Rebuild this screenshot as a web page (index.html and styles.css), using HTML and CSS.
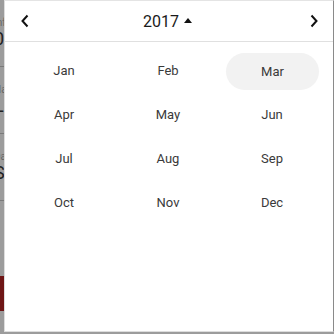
FILE: index.html
```html
<!DOCTYPE html>
<html lang="en">
    <head>
        <meta charset="UTF-8" />
        <link rel="stylesheet" href="styles.css">
    </head>
    <body>
        <div class="page">
            <div class="field"><span class="label">Info</span><span class="value">0</span></div>
            <div class="field"><span class="label">Name</span><span class="value">Li</span></div>
            <div class="field"><span class="label">Date</span><span class="value">Si</span></div>
            <div class="spacer"></div>
            <div class="redbar"></div>
        </div>
        <div class="picker">
            <div class="picker_head">
                <button class="nav">
                    <svg width="10" height="14" viewBox="0 0 10 14"><path d="M7.5 1.5 L2.5 7 L7.5 12.5" fill="none" stroke="#111" stroke-width="2"/></svg>
                </button>
                <div class="year">2017 <span class="caret"></span></div>
                <button class="nav">
                    <svg width="10" height="14" viewBox="0 0 10 14"><path d="M2.5 1.5 L7.5 7 L2.5 12.5" fill="none" stroke="#111" stroke-width="2"/></svg>
                </button>
            </div>
            <div class="months">
                <div class="month">Jan</div>
                <div class="month">Feb</div>
                <div class="month month_selected">Mar</div>
                <div class="month">Apr</div>
                <div class="month">May</div>
                <div class="month">Jun</div>
                <div class="month">Jul</div>
                <div class="month">Aug</div>
                <div class="month">Sep</div>
                <div class="month">Oct</div>
                <div class="month">Nov</div>
                <div class="month">Dec</div>
            </div>
        </div>
    </body>
</html>
```
FILE: styles.css
```css
html, body {
    margin: 0;
    height: 100%;
}
body {
    background-color: #9c9c9c;
    font-family: Roboto, "Liberation Sans", sans-serif;
    position: relative;
    overflow: hidden;
}
.page {
    display: flex;
    flex-direction: column;
    height: 100%;
}
.field {
    height: 66px;
    border-bottom: 1px solid #7a7a7a;
    display: flex;
    flex-direction: column;
    justify-content: center;
    margin-left: -6px;
}
.label { font-size: 10px; color: #666; }
.value { font-size: 18px; color: #222; }
.spacer { height: 75px; }
.redbar {
    height: 35px;
    background-color: #6e1515;
}
.picker {
    position: absolute;
    left: 4px;
    top: 0;
    width: 328px;
    height: 330px;
    background-color: #fff;
    border: 1px solid #ddd;
    border-top-color: #e4e4e4;
    border-right-color: #8a8a8a;
}
.picker_head {
    height: 40px;
    border-bottom: 1px solid #e0e0e0;
    display: flex;
    align-items: center;
    justify-content: space-between;
    padding: 0 12px 0 13px;
}
.nav {
    border: none;
    background: none;
    padding: 0;
    width: 14px;
    height: 20px;
    display: flex;
    align-items: center;
    justify-content: center;
}
.year {
    font-size: 16px;
    color: #1a1a1a;
    display: flex;
    align-items: center;
    gap: 5px;
    margin-left: -4px;
}
.caret {
    width: 0;
    height: 0;
    border-left: 4px solid transparent;
    border-right: 4px solid transparent;
    border-bottom: 5px solid #111;
    margin-bottom: 2px;
}
.months {
    display: grid;
    grid-template-columns: repeat(3, 104px);
    grid-auto-rows: 44px;
    padding: 6px 0 0 7px;
}
.month {
    font-size: 13px;
    color: #3a3a3a;
    display: flex;
    align-items: center;
    justify-content: center;
    margin: 3px 5px;
    border-radius: 19px;
}
.month_selected {
    background-color: #f2f2f2;
    margin: 5px 5px 2px 6px;
}
```
